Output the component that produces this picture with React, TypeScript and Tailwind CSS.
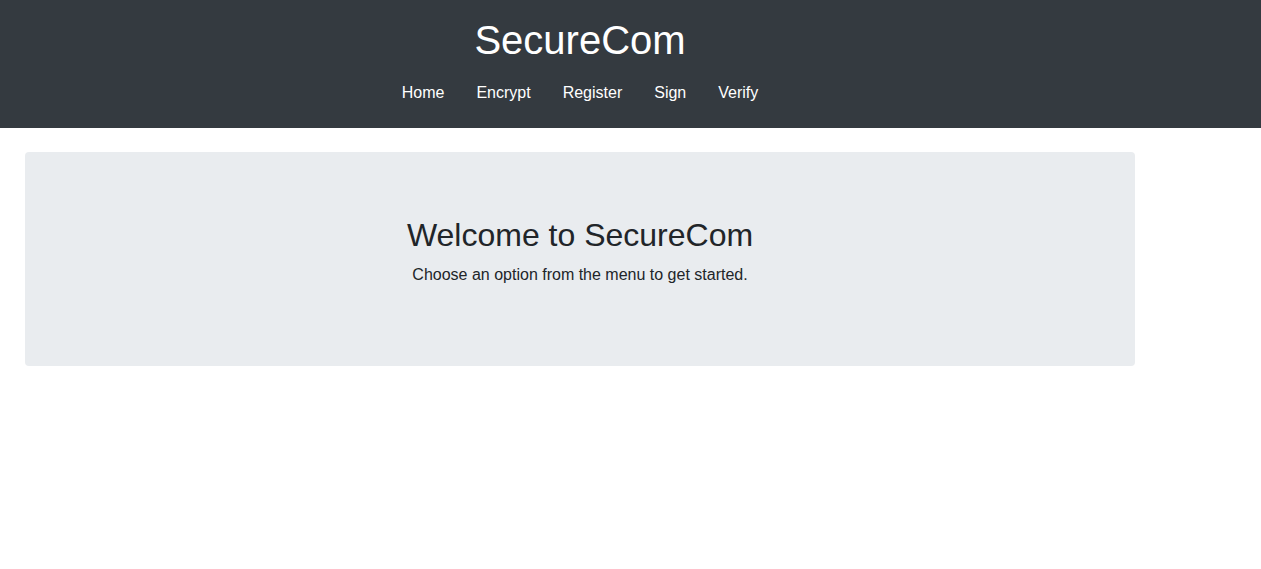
import React from 'react';

const links = ['Home', 'Encrypt', 'Register', 'Sign', 'Verify'];

export default function App() {
  return <div className="min-h-screen bg-white text-[#212529] font-['Liberation_Sans',Arial,sans-serif]">
      <header className="bg-[#343a40] pt-4 pb-[15px]">
        <div className="ml-[25px] w-[1110px] flex flex-col items-center">
          <h1 className="text-[40px] leading-[48px] text-white mb-[9px]">SecureCom</h1>
          <nav className="flex">
            {links.map(l => <a key={l} href="#" className="px-4 py-2 text-base leading-6 text-white">
                {l}
              </a>)}
          </nav>
        </div>
      </header>
      <main className="ml-[25px] w-[1110px] mt-6">
        <div className="bg-[#e9ecef] rounded px-8 py-16 text-center">
          <h2 className="text-[32px] leading-[38px] mb-[9px]">Welcome to SecureCom</h2>
          <p className="text-base leading-6 mb-[15px]">Choose an option from the menu to get started.</p>
        </div>
      </main>
    </div>;
}
